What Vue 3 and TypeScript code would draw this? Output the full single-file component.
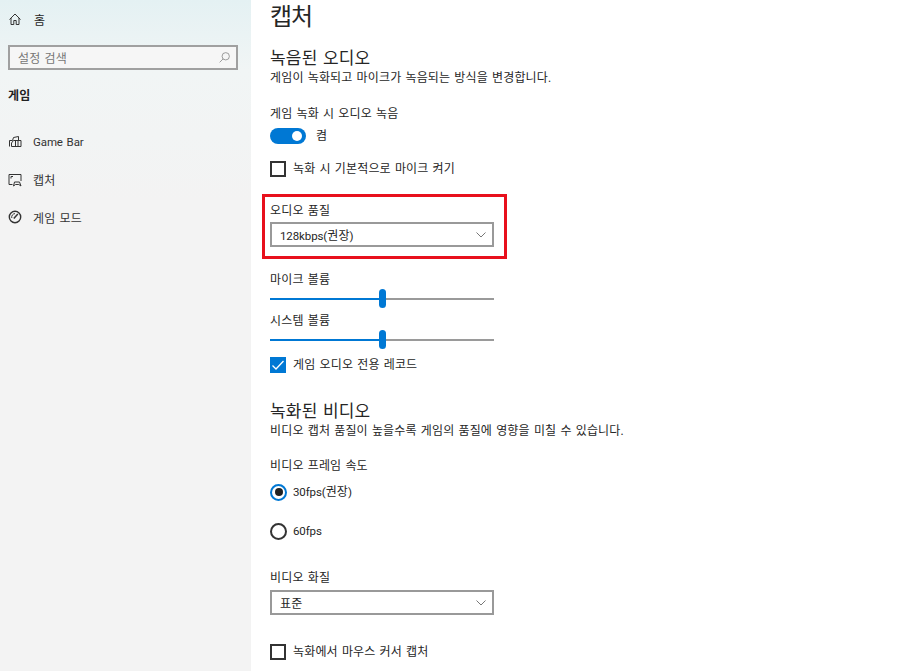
<script setup lang="ts">
interface NavItem { label: string; icon: string; latin?: boolean }
const nav: NavItem[] = [
  { label: 'Game Bar', icon: 'bar', latin: true },
  { label: '캡처', icon: 'capture' },
  { label: '게임 모드', icon: 'gauge' },
]
</script>

<template>
  <div class="app">
    <aside class="side">
      <div class="home">
        <svg class="ico" viewBox="0 0 14 14" fill="none" stroke="#333" stroke-width="1">
          <path d="M1.500 7.500 7 2 12.500 7.500M3 6V12.500H5.800V8.500H8.200V12.500H11V6" />
        </svg>
        <span>홈</span>
      </div>
      <div class="search">
        <span>설정 검색</span>
        <svg class="search-ico" viewBox="0 0 16 16" fill="none" stroke="#888" stroke-width="1">
          <circle cx="9.500" cy="6.500" r="4.500" />
          <path d="M6.300 9.700 2 14" />
        </svg>
      </div>
      <div class="group">게임</div>
      <nav class="nav">
        <div v-for="item in nav" :key="item.label" class="nav-item">
          <svg class="ico" viewBox="0 0 14 14" fill="none" stroke="#333" stroke-width="1">
            <template v-if="item.icon === 'bar'">
              <path d="M1.500 11.500V5.500H4.500L5.500 2.500 10.500 1.500V5.500" />
              <path d="M3.500 11.500V8L5.500 5.500H13V11.500H3.500Z" />
              <path d="M7.500 5.500V11.500M10 5.500V11.500" />
            </template>
            <template v-else-if="item.icon === 'capture'">
              <path d="M4.500 11.500H1V1.500H13V8" />
              <path d="M3 3.500H5M3 3.500V5.500" />
              <path d="M5.500 13 6.500 9H11.500L13 13 10.800 11.500H7.500L5.500 13Z" />
            </template>
            <template v-else>
              <circle cx="7" cy="7" r="5.700" stroke-width="1.400" />
              <path d="M5.800 8.400 9.800 4" stroke-width="1.500" />
              <path d="M3.800 8A3.500 3.500 0 0 1 7 3.600" />
            </template>
          </svg>
          <span :class="{ latin: item.latin }">{{ item.label }}</span>
        </div>
      </nav>
    </aside>

    <main class="main">
      <h1 class="title">캡처</h1>

      <h2 class="heading first">녹음된 오디오</h2>
      <p class="text desc">게임이 녹화되고 마이크가 녹음되는 방식을 변경합니다.</p>

      <p class="text label toggle-label">게임 녹화 시 오디오 녹음</p>
      <div class="toggle-row">
        <span class="toggle"><span class="knob"></span></span>
        <span class="text">켬</span>
      </div>

      <div class="check-row check-mic">
        <span class="box"></span>
        <span class="text">녹화 시 기본적으로 마이크 켜기</span>
      </div>

      <section class="highlight">
        <p class="text label">오디오 품질</p>
        <div class="select select-in">
          <span><span class="latin">128kbps(</span>권장<span class="latin">)</span></span>
          <svg class="chev" viewBox="0 0 10 6" fill="none" stroke="#777" stroke-width="1"><path d="M.5.500 5 5 9.500.500" /></svg>
        </div>
      </section>

      <p class="text label slim mic-label">마이크 볼륨</p>
      <div class="slider"><span class="fill"></span><span class="thumb"></span></div>
      <p class="text label slim sys-label">시스템 볼륨</p>
      <div class="slider"><span class="fill"></span><span class="thumb"></span></div>

      <div class="check-row check-game">
        <span class="box on">
          <svg viewBox="0 0 16 16" fill="none" stroke="#fff" stroke-width="1.300"><path d="M2.500 8.500 6 12 13.500 4" /></svg>
        </span>
        <span class="text">게임 오디오 전용 레코드</span>
      </div>

      <h2 class="heading video-head">녹화된 비디오</h2>
      <p class="text desc">비디오 캡처 품질이 높을수록 게임의 품질에 영향을 미칠 수 있습니다.</p>

      <p class="text label fps-label">비디오 프레임 속도</p>
      <div class="radio-row r30">
        <span class="radio on"></span>
        <span class="text"><span class="latin">30fps(</span>권장<span class="latin">)</span></span>
      </div>
      <div class="radio-row r60">
        <span class="radio"></span>
        <span class="text latin">60fps</span>
      </div>

      <p class="text label quality-label">비디오 화질</p>
      <div class="select select-q">
        <span>표준</span>
        <svg class="chev" viewBox="0 0 10 6" fill="none" stroke="#777" stroke-width="1"><path d="M.5.500 5 5 9.500.500" /></svg>
      </div>

      <div class="check-row check-mouse">
        <span class="box"></span>
        <span class="text">녹화에서 마우스 커서 캡처</span>
      </div>
    </main>
  </div>
</template>

<style>
html, body { margin: 0; background: #fff; overflow: hidden; }
</style>

<style scoped>
* { box-sizing: border-box; }
.app {
  width: 924px;
  height: 671px;
  display: flex;
  overflow: hidden;
  font-family: Roboto, "Noto Sans CJK KR", sans-serif;
  color: #262626;
  font-size: 12px;
  letter-spacing: 0.15px;
  word-spacing: 1px;
}
.latin { font-size: 11.500px; letter-spacing: -0.1px; }
.side {
  width: 251px;
  flex: none;
  padding: 10px 0 0 8px;
  background: linear-gradient(180deg, #e4f1f3 0, #f1f5f5 70px, #f3f3f3 200px, #f3f3f3 100%);
}
.home { display: flex; align-items: center; gap: 12px; height: 18px; }
.ico { width: 14px; height: 14px; flex: none; }
.search {
  margin-top: 17px;
  width: 230px;
  height: 25px;
  border: 2px solid #a0a0a0;
  background: #f6f6f6;
  color: #777;
  display: flex;
  align-items: center;
  justify-content: space-between;
  padding: 0 5px 0 8px;
}
.search-ico { width: 13px; height: 13px; }
.group { margin-top: 16px; height: 20px; line-height: 20px; font-weight: 700; color: #222; }
.nav { margin-top: 26px; display: flex; flex-direction: column; gap: 17.500px; }
.nav-item { display: flex; align-items: center; gap: 11px; height: 20px; color: #333; }
.main { flex: 1; padding-left: 19px; }
.text { margin: 0; line-height: 18px; height: 18px; white-space: nowrap; }
.slim { height: 17px; line-height: 16px; }
.title { margin: 4px 0 0; height: 27px; line-height: 27px; font-size: 24px; font-weight: 400; letter-spacing: -1px; }
.heading { margin: 0; font-size: 17px; font-weight: 400; height: 22px; line-height: 22px; letter-spacing: 0.2px; }
.first { margin-top: 16px; }
.desc { margin-top: 0; }
.toggle-label { margin-top: 18px; }
.toggle-row { display: flex; align-items: center; gap: 10px; margin-top: 5px; height: 16px; }
.toggle { width: 36px; height: 16px; border-radius: 8px; background: #0078d4; position: relative; display: block; }
.knob { position: absolute; width: 10px; height: 10px; border-radius: 50%; background: #fff; top: 3px; right: 4px; }
.check-row { display: flex; align-items: center; gap: 7px; height: 16px; }
.box { width: 16px; height: 16px; border: 2px solid #333; flex: none; display: block; }
.box.on { background: #0078d4; border-color: #0078d4; position: relative; }
.box.on svg { position: absolute; inset: -2px; width: 16px; height: 16px; }
.check-mic { margin-top: 17px; }
.highlight {
  margin: 17px 0 0 -8px;
  width: 245px;
  height: 65px;
  border: 3px solid #e8101c;
  padding: 5px 0 0 5px;
}
.select {
  width: 224px;
  height: 25px;
  border: 2px solid #999;
  display: flex;
  align-items: center;
  justify-content: space-between;
  padding: 0 6px 0 8px;
  background: #fff;
}
.select-in { margin-top: 2px; }
.chev { width: 10px; height: 6px; }
.mic-label { margin-top: 13px; }
.slider { position: relative; width: 224px; height: 19px; margin-top: 0; }
.slider::before { content: ""; position: absolute; left: 0; right: 0; top: 9px; height: 2px; background: #9a9a9a; }
.fill { position: absolute; left: 0; width: 112px; top: 9px; height: 2px; background: #0078d4; }
.thumb { position: absolute; left: 109px; top: 0; width: 7px; height: 19px; border-radius: 4px; background: #0078d4; }
.sys-label { margin-top: 5px; }
.check-game { margin-top: 8px; }
.video-head { margin-top: 27px; }
.fps-label { margin-top: 17px; }
.radio-row { display: flex; align-items: center; gap: 6px; height: 18px; }
.radio { width: 17px; height: 17px; border-radius: 50%; border: 2px solid #333; display: block; position: relative; flex: none; }
.radio.on { border-color: #0078d4; }
.radio.on::after { content: ""; position: absolute; left: 2.500px; top: 2.500px; width: 8px; height: 8px; border-radius: 50%; background: #222; }
.r30 { margin-top: 8px; }
.r60 { margin-top: 21px; }
.quality-label { margin-top: 29px; }
.select-q { margin-top: 3px; }
.check-mouse { margin-top: 29px; }
</style>
